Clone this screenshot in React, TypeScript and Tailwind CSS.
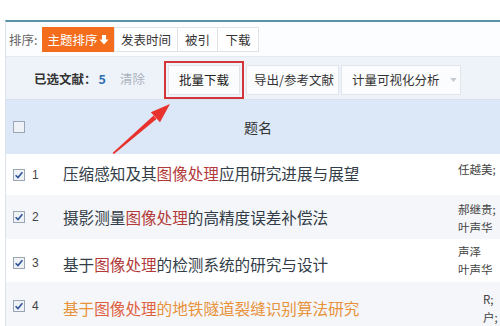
const CJK = { fontFamily: '"Noto Sans CJK SC", "Noto Sans", sans-serif' };

const Check = ({ checked }: { checked?: boolean }) => (
  <svg width="12" height="12" viewBox="0 0 12 12" className="shrink-0">
    <rect x="0.5" y="0.5" width="11" height="11" fill="#eef1f5" stroke="#9aa6b4" />
    {checked && <path d="M2.6 6.2 L5 8.6 L9.4 3.2" fill="none" stroke="#2f5597" strokeWidth="1.6" />}
  </svg>
);

const Hl = ({ children, c = "#b23a3a" }: { children: React.ReactNode; c?: string }) => (
  <span style={{ color: c }}>{children}</span>
);

const rows = [
  {
    n: 1,
    bg: "bg-white",
    h: "h-[41px]",
    pt: "pt-[9px]",
    apt: "pt-[6px] pl-0",
    title: (
      <>
        压缩感知及其<Hl>图像处理</Hl>应用研究进展与展望
      </>
    ),
    authors: ["任越美;"],
  },
  {
    n: 2,
    bg: "bg-[#f4f6f9]",
    h: "h-[44px]",
    pt: "pt-[12px]",
    apt: "pt-[5px] pl-0",
    title: (
      <>
        摄影测量<Hl>图像处理</Hl>的高精度误差补偿法
      </>
    ),
    authors: ["郝继贵;", "叶声华"],
  },
  {
    n: 3,
    bg: "bg-white",
    h: "h-[43px]",
    pt: "pt-[15px]",
    apt: "pt-[3px] pl-0",
    title: (
      <>
        基于<Hl>图像处理</Hl>的检测系统的研究与设计
      </>
    ),
    authors: ["声泽", "叶声华"],
  },
  {
    n: 4,
    bg: "bg-[#f4f6f9]",
    h: "h-[45px]",
    pt: "pt-[16px]",
    apt: "pt-[8px] pl-[25px]",
    orange: true,
    title: (
      <>
        基于<Hl c="#e0603e">图像处理</Hl>的地铁隧道裂缝识别算法研究
      </>
    ),
    authors: ["R;", "户;"],
  },
];

export default function App() {
  return (
    <div className="relative w-[500px] h-[326px] overflow-hidden bg-white text-[#333]" style={CJK}>
      <div className="h-[20px]" />
      <div className="ml-[5px] border-l border-[#dde3ea] border-t-2 border-t-[#5a93a6]">
        {/* sort row */}
        <div className="h-[35px] flex items-start pt-[5px] pl-[3px] bg-[#fcfdfe] border-b border-[#e3e9f0] whitespace-nowrap">
          <span className="text-[12.5px] leading-[25px] text-[#666] w-[33px] shrink-0">排序:</span>
          <div className="flex h-[25px] text-[12.5px] leading-[23px]">
            <span className="flex items-center justify-center gap-[1px] bg-[#f36d1d] text-white w-[72px]">
              主题排序
              <svg width="10" height="11" viewBox="0 0 10 11">
                <path d="M3 1 H7 V5.5 H9.5 L5 10.5 L0.5 5.5 H3 Z" fill="#fff" />
              </svg>
            </span>
            <span className="border border-[#e0e4e9] bg-white w-[64px] text-center text-[#333]">发表时间</span>
            <span className="border border-l-0 border-[#e0e4e9] bg-white w-[40px] text-center text-[#333]">被引</span>
            <span className="border border-l-0 border-[#e0e4e9] bg-white w-[41px] text-center text-[#333]">下载</span>
          </div>
        </div>

        {/* toolbar */}
        <div className="h-[43px] flex items-start pt-[4px] bg-[#eef3fa] border-b border-[#d7e1ee] whitespace-nowrap">
          <div className="flex items-center h-[36px] pl-[28px] w-[158px] shrink-0 text-[12.5px]">
            <span className="font-bold text-[#333]">已选文献：</span>
            <span className="font-bold text-[#2f6fb0] ml-[2px]">5</span>
            <span className="text-[#aab2bd] ml-[14px]">清除</span>
          </div>
          <div className="border-2 border-[#d2363a] p-[2px] h-[38px] shrink-0">
            <div className="w-[72px] h-[30px] bg-[#fbfcfd] border border-[#e2e6eb] text-[12.5px] flex items-center justify-center text-[#222]">
              批量下载
            </div>
          </div>
          <div className="ml-[2px] mt-[4px] w-[93px] shrink-0 h-[30px] bg-[#fbfcfd] border border-[#e2e6eb] text-[12.5px] flex items-center pl-[7px] text-[#333]">
            导出/参考文献
          </div>
          <div className="ml-[2px] mt-[4px] w-[120px] shrink-0 h-[30px] bg-[#fbfcfd] border border-[#e2e6eb] text-[12.5px] flex items-center pl-[10px] text-[#333]">
            计量可视化分析
            <svg width="7" height="4" viewBox="0 0 8 5" className="ml-[10px]">
              <path d="M0 0 H8 L4 5 Z" fill="#c4cad2" />
            </svg>
          </div>
        </div>

        {/* header */}
        <div className="h-[54px] flex items-center bg-[#dce8f7]">
          <div className="w-[52px] shrink-0 pl-[7px]">
            <Check />
          </div>
          <div className="w-[400px] shrink-0 text-center text-[14px] text-[#333]">题名</div>
        </div>

        {/* rows */}
        {rows.map((r) => (
          <div key={r.n} className={`flex items-start ${r.bg} ${r.h}`}>
            <div className={`w-[52px] shrink-0 pl-[7px] flex items-center ${r.pt} h-[32px]`}>
              <Check checked />
              <span className="ml-[7px] text-[12px] text-[#444]" style={{ fontFamily: '"Liberation Sans", sans-serif' }}>
                {r.n}
              </span>
            </div>
            <div
              className={`w-[400px] shrink-0 pl-[5px] text-[15.6px] leading-[20px] whitespace-nowrap ${r.pt} ${
                r.orange ? "text-[#e8923a]" : "text-[#333d48]"
              }`}
            >
              {r.title}
            </div>
            <div className={`flex-1 min-w-0 overflow-hidden text-[11.5px] leading-[18px] text-[#444] whitespace-nowrap ${r.apt}`}>
              {r.authors.map((a) => (
                <div key={a}>{a}</div>
              ))}
            </div>
          </div>
        ))}
      </div>

      {/* red annotation arrow */}
      <svg className="absolute left-0 top-0 pointer-events-none" width="500" height="326" viewBox="0 0 500 326">
        <polygon points="112.5,153 114,154 156.5,119 153.6,115.6" fill="#e8322e" />
        <polygon points="170,104 150.8,112.2 160,122.2" fill="#e8322e" />
      </svg>
    </div>
  );
}
